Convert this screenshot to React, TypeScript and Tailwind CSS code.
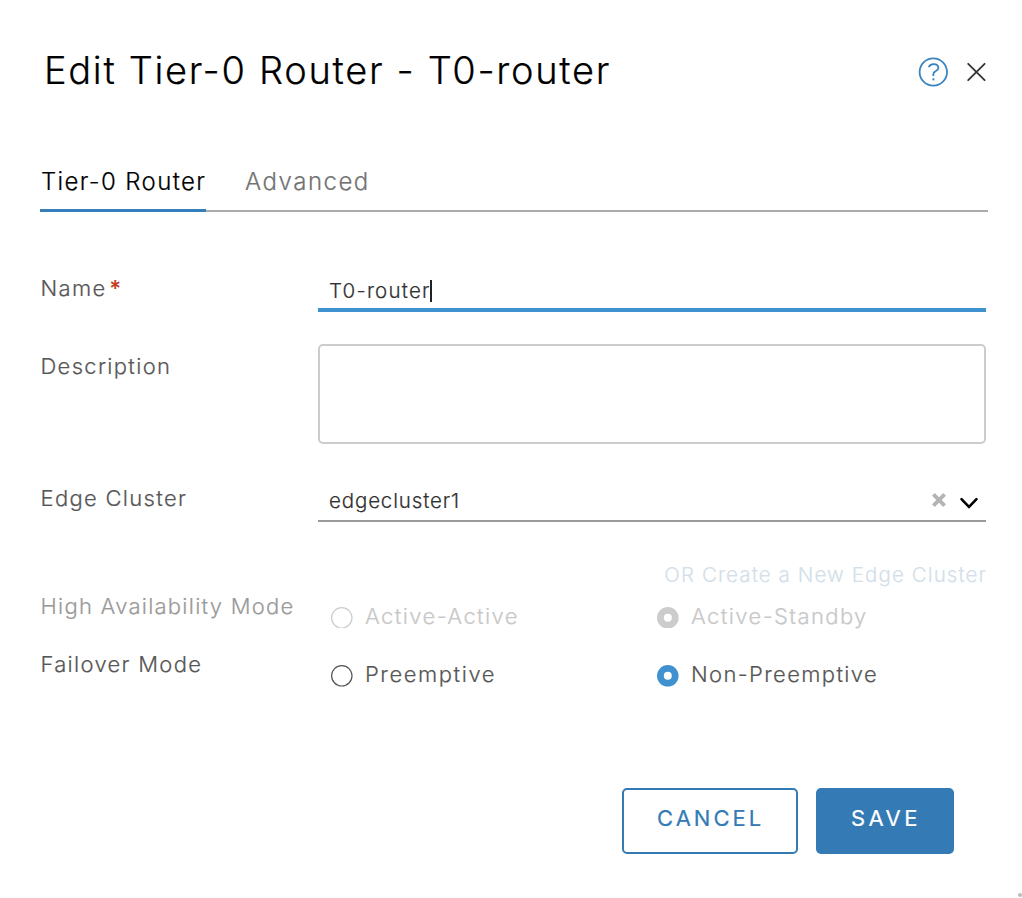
import React from "react";

function Radio({ checked, disabled }: { checked?: boolean; disabled?: boolean }) {
  const color = disabled ? "#cccccc" : checked ? "#3f92cf" : "#565656";
  return (
    <svg width="22" height={disabled ? 21 : 22} className="mt-[5px] shrink-0 overflow-hidden">
      {checked ? (
        <circle cx="10.8" cy="10.8" r="7.4" fill="none" stroke={color} strokeWidth="6.8" />
      ) : (
        <circle cx="10.8" cy="10.8" r="10.2" fill="#fff" stroke={color} strokeWidth="1.2" />
      )}
    </svg>
  );
}

export default function App() {
  return (
    <main className="flex h-[898px] w-[1022px] flex-col overflow-hidden bg-white font-['Inter',sans-serif] font-light text-[#565656] [-webkit-text-stroke:0.2px_currentColor]">
      <header className="flex h-[168px] items-start justify-between pt-[48px] pr-[35px] pl-[44px]">
        <h1 className="text-[38px] leading-[45px] tracking-[1.67px] whitespace-nowrap text-black">Edit Tier-0 Router - T0-router</h1>
        <div className="flex items-center gap-[16px] pt-[8px]">
          <svg width="32" height="32" viewBox="0 0 32 32" fill="none" stroke="#3a84c0" strokeWidth="1.8">
            <circle cx="16.3" cy="16" r="13.7" />
            <path d="M11.6 11.2C12.8 8.9 14.6 8.2 16.6 8.2C19.5 8.2 21.4 9.8 21.4 12C21.4 15.2 16.3 14.9 16.3 18.2V20" />
            <circle cx="16.4" cy="23.4" r="1.1" fill="#3a84c0" stroke="none" />
          </svg>
          <svg width="22" height="22" viewBox="0 0 22 22" fill="none" stroke="#333" strokeWidth="1.8" strokeLinecap="round">
            <path d="M3.2 2.8L19.6 19.2M19.6 2.8L3.2 19.2" />
          </svg>
        </div>
      </header>

      <nav className="mr-[34px] ml-[40px] flex h-[44px] gap-[40px] border-b-2 border-[#aaaaaa] text-[24px] leading-[28px] whitespace-nowrap">
        <button className="-mb-[2px] flex w-[166px] items-start border-b-[3px] border-[#3580bc] pl-px tracking-[1.35px] text-black">Tier-0 Router</button>
        <button className="-ml-px flex items-start tracking-[1.5px] text-[#737373]">Advanced</button>
      </nav>

      <form className="flex flex-col pt-[58px] pr-[36px] pl-[40px] text-[22px] leading-[28px] tracking-[1.3px]">
        <div className="flex h-[42px]">
          <label className="w-[278px] shrink-0 pt-[4px] pl-[0.5px]">
            Name<span className="ml-[3px] font-medium text-[#c23b22]">*</span>
          </label>
          <div className="flex grow items-start border-b-4 border-[#3f92cf] pt-[7px] pl-[11px] text-[20.5px] tracking-[1.2px] text-[#313131]">
            <span>T0-router</span>
            <span className="-ml-px mt-[3px] h-[22px] w-[2px] bg-[#222]" />
          </div>
        </div>

        <div className="mt-[32px] flex h-[100px]">
          <label className="w-[278px] shrink-0 pt-[8px] pl-[0.5px]">Description</label>
          <div className="grow rounded-[5px] border-2 border-[#cccccc]" />
        </div>

        <div className="mt-[36px] flex h-[42px]">
          <label className="w-[278px] shrink-0 pt-[4px] pl-[0.5px]">Edge Cluster</label>
          <div className="flex grow items-start border-b-2 border-[#9a9a9a] pt-[7px] pl-[11px] text-[20.5px] tracking-[0.85px] text-[#313131]">
            <span>edgecluster1</span>
            <svg width="14" height="14" viewBox="0 0 14 14" className="mt-[6px] ml-auto" stroke="#b4b4b4" strokeWidth="3.8">
              <path d="M1.4 1.4L12.6 12.6M12.6 1.4L1.4 12.6" />
            </svg>
            <svg width="20" height="14" viewBox="0 0 20 14" className="mt-[9px] mr-[7px] ml-[13px]" fill="none" stroke="#000" strokeWidth="2.6" strokeLinecap="round">
              <path d="M2.5 3.2L10 10.8L17.5 3.2" />
            </svg>
          </div>
        </div>

        <div className="mt-[39px] -mr-px flex h-[28px] justify-end text-[20.5px] tracking-[1.1px] text-[#d3dfea]">OR Create a New Edge Cluster</div>

        <div className="mt-[3px] flex h-[58px] whitespace-nowrap">
          <label className="w-[291px] shrink-0 pl-[0.5px] tracking-[1.25px] text-[#9a9a9a]">High Availability Mode</label>
          <div className="flex w-[326px] gap-[12px] pt-[10px] text-[#c8c8c8]">
            <Radio disabled />
            <span className="tracking-[1.4px]">Active-Active</span>
          </div>
          <div className="flex gap-[12px] pt-[10px] text-[#c8c8c8]">
            <Radio checked disabled />
            <span className="tracking-[1.4px]">Active-Standby</span>
          </div>
        </div>

        <div className="flex h-[58px] whitespace-nowrap">
          <label className="w-[291px] shrink-0 pl-[0.5px]">Failover Mode</label>
          <div className="flex w-[326px] gap-[12px] pt-[10px]">
            <Radio />
            <span className="tracking-[1.55px]">Preemptive</span>
          </div>
          <div className="flex gap-[12px] pt-[10px]">
            <Radio checked />
            <span className="tracking-[1.35px]">Non-Preemptive</span>
          </div>
        </div>
      </form>

      <footer className="mt-[80px] flex justify-end gap-[18px] pr-[68px] text-[22px] leading-[28px]">
        <button className="flex h-[66px] w-[176px] items-start rounded-[5px] border-2 border-[#347bb6] pt-[14px] pl-[33px] font-normal tracking-[3px] text-[#347bb6]">CANCEL</button>
        <button className="flex h-[66px] w-[138px] items-start rounded-[5px] bg-[#347bb6] pt-[16px] pl-[35px] font-normal tracking-[3.4px] text-white">SAVE</button>
      </footer>
      <span className="mt-[39px] h-[4px] w-[4px] self-end rounded-full bg-[#bbbbbb]" />
    </main>
  );
}
